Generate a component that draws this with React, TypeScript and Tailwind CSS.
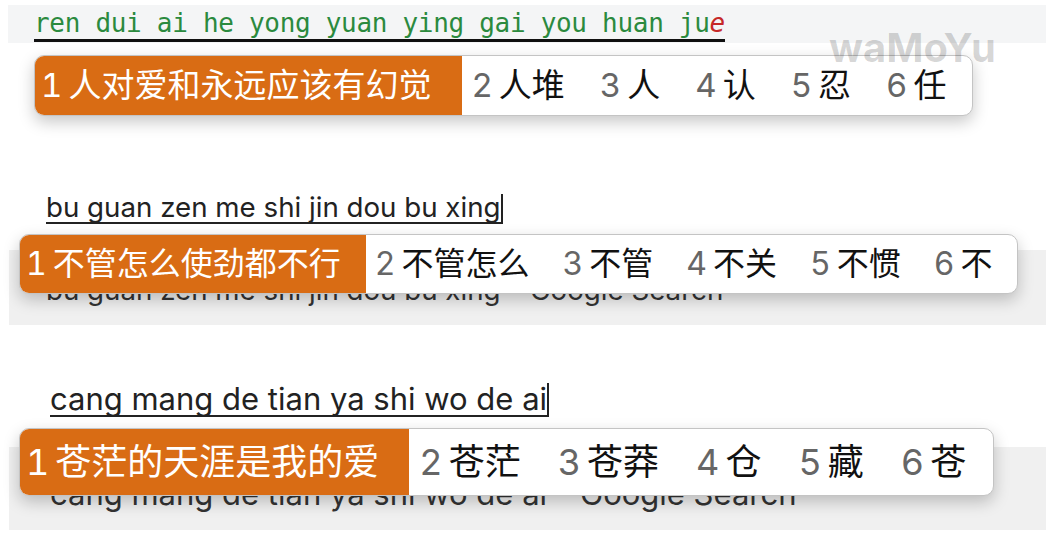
import React from "react";

const CJK = "font-['Inter','Noto_Sans_CJK_SC',sans-serif]";

type Variant = "a" | "b" | "c";

const firstCls: Record<Variant, string> = {
  a: "pl-[6px] pr-[31px] text-[33px]",
  b: "pl-[6px] pr-[25px] text-[32px]",
  c: "pl-[6px] pr-[30px] text-[36px]",
};
const itemCls: Record<Variant, string> = {
  a: "pl-[9px] pr-[26px] text-[33px]",
  b: "pl-[9px] pr-[24px] text-[32px]",
  c: "pl-[10px] pr-[27px] text-[36px]",
};

function Bar({
  items,
  variant,
  className,
}: {
  items: string[];
  variant: Variant;
  className: string;
}) {
  return (
    <div
      className={
        "absolute flex items-stretch rounded-[10px] overflow-hidden border border-[#c4c4c4] bg-white shadow-[0_6px_16px_rgba(0,0,0,0.22)] " +
        CJK +
        " " +
        className
      }
    >
      {items.map((t, i) => {
        const first = i === 0;
        return (
          <div
            key={i}
            className={
              "flex items-center whitespace-nowrap " +
              (first ? firstCls[variant] : itemCls[variant]) +
              " " +
              (first ? "bg-[#d96c14] text-white" : "text-[#111]")
            }
          >
            <span className={"mr-[6px] tabular-nums " + (first ? "text-white" : "text-[#666]")}>
              {i + 1}
            </span>
            <span>{t}</span>
          </div>
        );
      })}
    </div>
  );
}

export default function App() {
  return (
    <div className="relative flex w-[1046px] h-[540px] flex-col overflow-hidden bg-white">
      {/* Section 1 */}
      <div className="relative flex h-[150px] flex-col pt-[5px]">
        <div className="ml-[8px] h-[38px] bg-[#f4f5f6] pl-[26px] pt-[4px]">
          <span className="inline-block border-b-[3px] border-[#111] pb-[2px] font-['DejaVu_Sans_Mono',monospace] text-[26px] leading-[28px] tracking-[-0.3px] text-[#2b8a3e]">
            ren dui ai he yong yuan ying gai you huan ju
            <span className="italic text-[#c62828]">e</span>
          </span>
        </div>
        <Bar
          variant="a"
          className="top-[55px] left-[34px] h-[61px]"
          items={["人对爱和永远应该有幻觉", "人堆", "人", "认", "忍", "任"]}
        />
      </div>

      {/* Section 2 */}
      <div className="relative flex h-[190px] flex-col pt-[43px]">
        <div className="ml-[46px] flex items-end">
          <span className="inline-block border-b-2 border-[#222] font-['Inter',sans-serif] text-[27.7px] leading-[29px] text-[#222]">
            bu guan zen me shi jin dou bu xing
          </span>
          <span className="inline-block w-[2px] h-[30px] bg-[#222]" />
        </div>
        <div className="mt-[26px] ml-[9px] h-[75px] bg-[#f0f0f0] pl-[37px] pt-[25px]">
          <span className="font-['Inter',sans-serif] text-[27.7px] leading-[30px] text-[#333]">
            bu guan zen me shi jin dou bu xing – Google Search
          </span>
        </div>
        <Bar
          variant="b"
          className="top-[84px] left-[19px] h-[60px]"
          items={["不管怎么使劲都不行", "不管怎么", "不管", "不关", "不惯", "不"]}
        />
      </div>

      {/* Section 3 */}
      <div className="relative flex h-[200px] flex-col pt-[43px]">
        <div className="ml-[50px] flex items-end">
          <span className="inline-block border-b-2 border-[#222] font-['Inter',sans-serif] text-[31px] leading-[32px] text-[#222]">
            cang mang de tian ya shi wo de ai
          </span>
          <span className="inline-block w-[2px] h-[34px] bg-[#222]" />
        </div>
        <div className="mt-[30px] ml-[9px] h-[83px] bg-[#f0f0f0] pl-[41px] pt-[31px]">
          <span className="font-['Inter',sans-serif] text-[31px] leading-[32px] text-[#333]">
            cang mang de tian ya shi wo de ai – Google Search
          </span>
        </div>
        <Bar
          variant="c"
          className="top-[88px] left-[19px] h-[68px]"
          items={["苍茫的天涯是我的爱", "苍茫", "苍莽", "仓", "藏", "苍"]}
        />
      </div>

      {/* Watermark */}
      <div className="pointer-events-none absolute left-[829px] top-[28px] font-['Inter',sans-serif] text-[40px] font-bold leading-[40px] text-black/[0.16]">
        waMoYu
      </div>
    </div>
  );
}
